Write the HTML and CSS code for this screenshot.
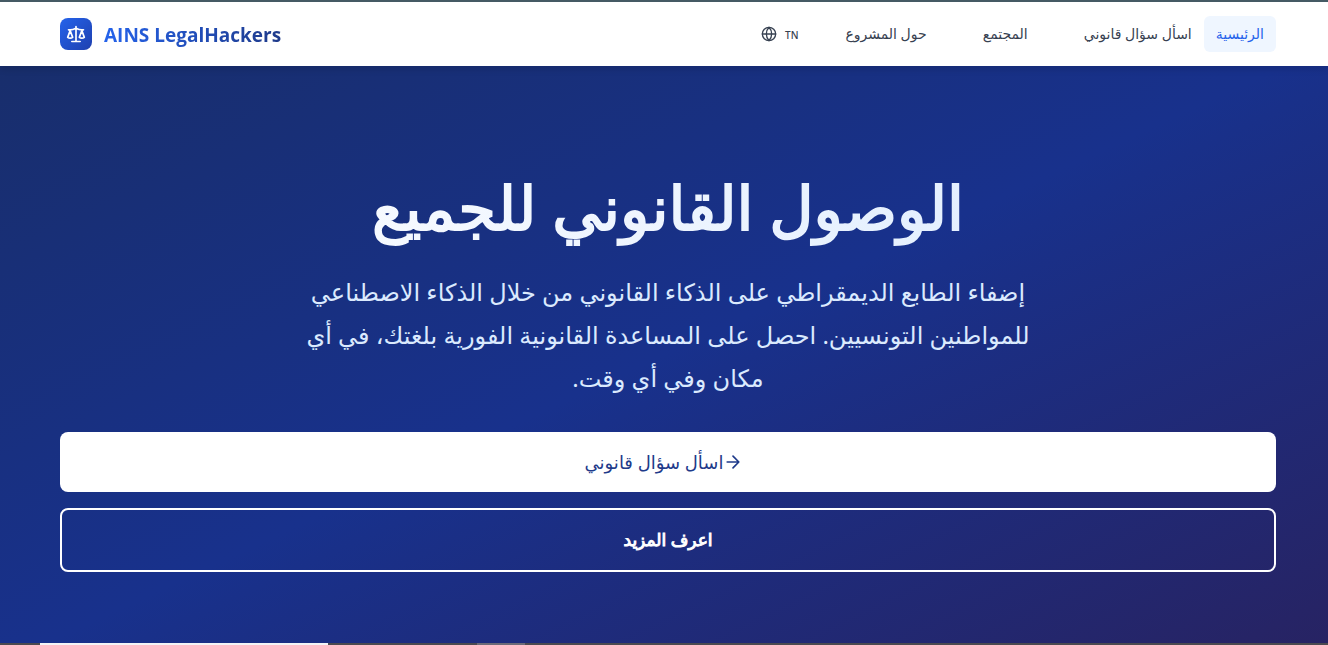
FILE: index.html
```html
<!DOCTYPE html>
<html lang="ar" dir="rtl">
<head>
<meta charset="utf-8">
<meta name="viewport" content="width=device-width, initial-scale=1">
<title>AINS LegalHackers</title>
<link rel="stylesheet" href="styles.css">
</head>
<body>
<header class="topbar">
  <nav class="nav">
    <a class="nav-link active" href="#">الرئيسية</a>
    <a class="nav-link" href="#">اسأل سؤال قانوني</a>
    <a class="nav-link spaced" href="#">المجتمع</a>
    <a class="nav-link spaced" href="#">حول المشروع</a>
    <button class="lang" type="button">
      <span class="lang-code">TN</span>
      <svg class="globe" viewBox="0 0 24 24" aria-hidden="true"><circle cx="12" cy="12" r="10"/><path d="M12 2a14.5 14.5 0 0 0 0 20 14.5 14.5 0 0 0 0-20M2 12h20"/></svg>
    </button>
  </nav>
  <a class="brand" href="#" dir="ltr">
    <span class="logo"><svg viewBox="0 0 24 24" aria-hidden="true"><path d="m16 16 3-8 3 8c-.87.65-1.92 1-3 1s-2.13-.35-3-1ZM2 16l3-8 3 8c-.87.65-1.92 1-3 1s-2.13-.35-3-1ZM7 21h10M12 3v18M3 7h2c2 0 5-1 7-2 2 1 5 2 7 2h2"/></svg></span>
    <span class="brand-name">AINS LegalHackers</span>
  </a>
</header>
<main class="hero">
  <h1 class="title">الوصول القانوني للجميع</h1>
  <p class="lead">إضفاء الطابع الديمقراطي على الذكاء القانوني من خلال الذكاء الاصطناعي للمواطنين التونسيين. احصل على المساعدة القانونية الفورية بلغتك، في أي مكان وفي أي وقت.</p>
  <div class="actions">
    <a class="btn primary" href="#"><svg viewBox="0 0 24 24" aria-hidden="true"><path d="M5 12h14M12 5l7 7-7 7"/></svg>اسأل سؤال قانوني</a>
    <a class="btn outline" href="#">اعرف المزيد</a>
  </div>
</main>
<footer class="strip"><span class="strip-light"></span><span class="strip-dim"></span></footer>
</body>
</html>
```
FILE: styles.css
```css
* { box-sizing: border-box; }
body {
  margin: 0;
  min-height: 100vh;
  display: flex;
  flex-direction: column;
  font-family: "Noto Sans", "DejaVu Sans", sans-serif;
}
a { text-decoration: none; }
svg { fill: none; stroke: currentColor; stroke-width: 2; stroke-linecap: round; stroke-linejoin: round; }
.topbar {
  z-index: 1;
  display: flex;
  align-items: center;
  justify-content: space-between;
  height: 66px;
  padding: 0 52px 0 60px;
  border-top: 2px solid #455a64;
  background: #fff;
  box-shadow: 0 4px 6px rgba(0, 0, 0, 0.1);
}
.nav { display: flex; align-items: center; }
.nav-link {
  padding: 8px 12px;
  border-radius: 6px;
  font-size: 14px;
  line-height: 20px;
  font-weight: 500;
  color: #374151;
}
.active { background: #eff6ff; color: #2563eb; }
.spaced { margin-right: 32px; }
.lang {
  display: flex;
  align-items: center;
  gap: 8px;
  margin-right: 32px;
  padding: 8px 3px;
  border: 0;
  background: none;
  font: 500 10px/16px "Noto Sans", sans-serif;
  color: #374151;
}
.lang-code { padding-top: 2px; }
.globe { width: 16px; height: 16px; }
.brand { display: flex; align-items: center; gap: 12px; }
.logo {
  display: flex;
  align-items: center;
  justify-content: center;
  width: 32px;
  height: 32px;
  border-radius: 8px;
  background: linear-gradient(135deg, #2563eb, #1e40af);
  color: #fff;
}
.logo svg { width: 20px; height: 20px; }
.brand-name {
  padding-top: 2px;
  font-family: "Open Sans", sans-serif;
  font-size: 19px;
  line-height: 28px;
  font-weight: 700;
  background: linear-gradient(90deg, #2563eb, #1e3a8a);
  background-clip: text;
  color: transparent;
}
.hero {
  flex: 1;
  padding: 106px 52px 64px 60px;
  background: linear-gradient(155deg, #182e6c, #18318c 50%, #272363);
  text-align: center;
}
.title {
  margin: 0 0 16px;
  padding-bottom: 12px;
  font-size: 61px;
  line-height: 70px;
  font-weight: 500;
  background: linear-gradient(90deg, #fff, #dbeafe);
  background-clip: text;
  color: transparent;
  -webkit-text-stroke: 2px transparent;
}
.lead {
  max-width: 768px;
  margin: 0 auto 33px;
  font-size: 24px;
  line-height: 43px;
  color: #dbeafe;
}
.actions { display: flex; flex-direction: column; gap: 16px; }
.btn {
  display: flex;
  align-items: center;
  justify-content: center;
  padding: 16px 32px;
  border-radius: 8px;
  font-size: 18px;
  line-height: 28px;
}
.primary { background: #fff; color: #1e3a8a; }
.primary svg { width: 20px; height: 20px; margin-right: 8px; }
.outline { border: 2px solid #fff; color: #fff; font-size: 17px; font-weight: 500; -webkit-text-stroke: 1px #fff; }
.strip { display: flex; direction: ltr; height: 2px; background: #4a4a50; }
.strip-light { width: 288px; margin-left: 40px; background: #f3f4f6; }
.strip-dim { width: 48px; margin-left: 149px; background: #6b6b78; }
```
